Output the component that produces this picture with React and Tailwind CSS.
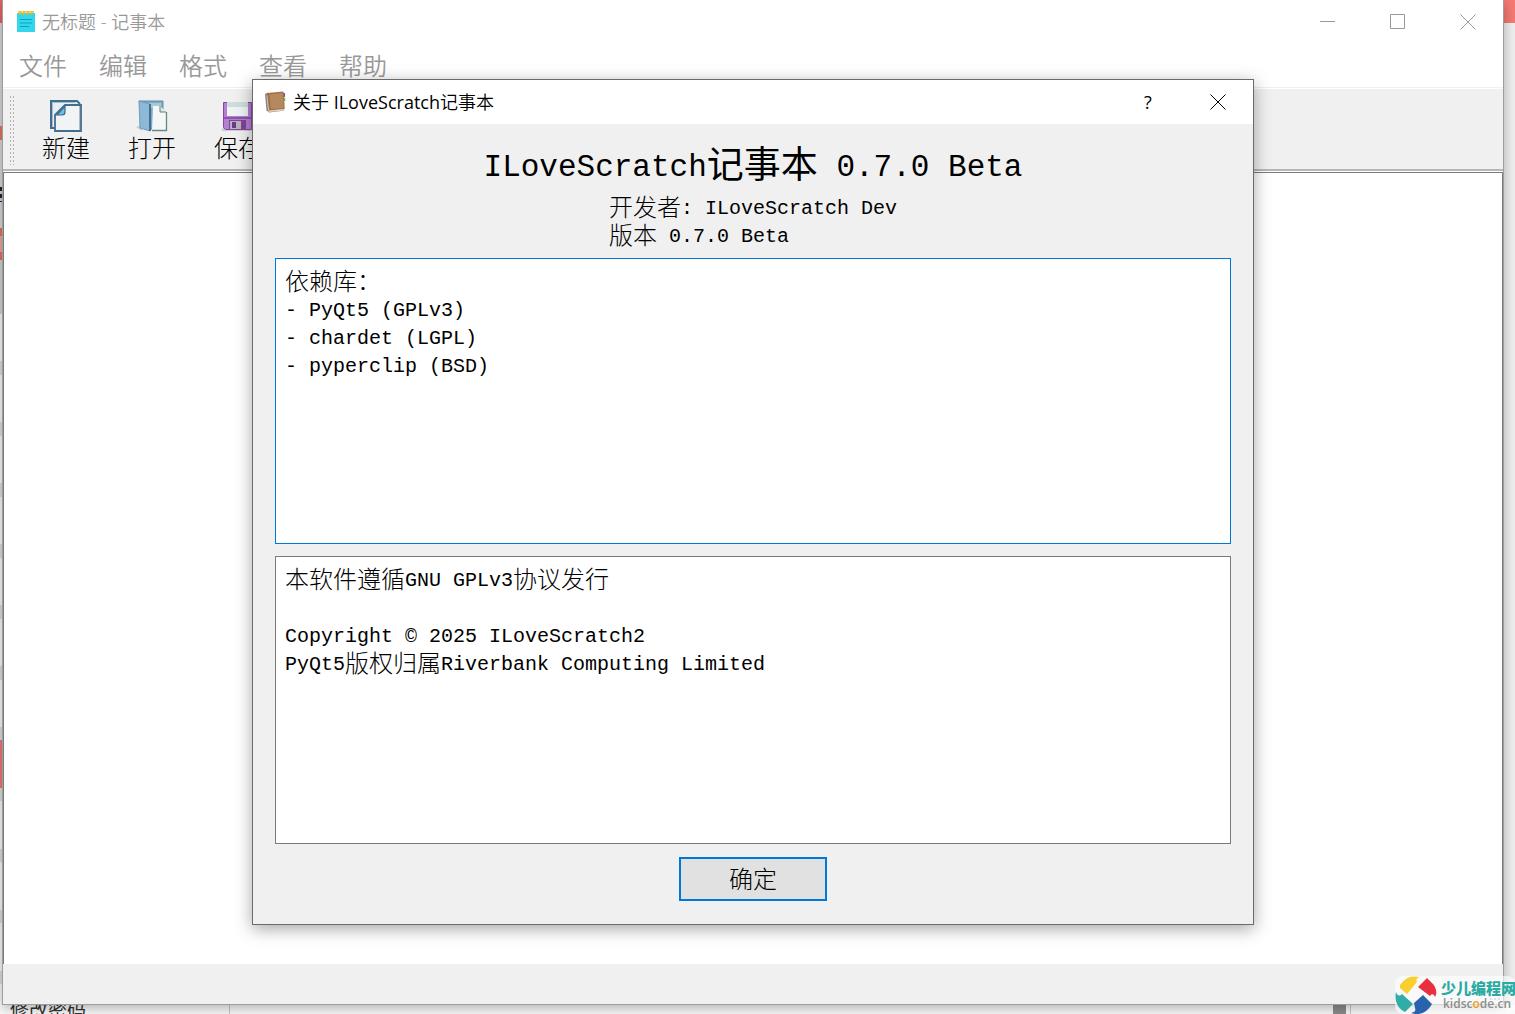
import React, { useState } from 'react';

const MENUS = ['文件', '编辑', '格式', '查看', '帮助'];

// Slices of the page that peek out to the left of the window
const LEFT_SLICES = [
  'h-[23px] bg-[#e86560]',
  'h-[103px] bg-[#dadada]',
  'h-3.5 bg-[#e07a64]',
  'h-[47px] bg-[#dadada]',
  'h-[15px] bg-[repeating-linear-gradient(#22223a_0_4px,#d0d6dc_4px_7px)]',
  'h-[26px] bg-[#dadada]',
  'h-2 bg-[#e07464]',
  'h-4 bg-[#e8aaa2]',
  'h-2 bg-[#e07464]',
  'h-[54px] bg-[#d6d6d4]',
];

function NotepadIcon() {
  return (
    <svg width="20" height="22" viewBox="0 0 20 22" aria-hidden="true">
      <rect x="1" y="2" width="18" height="19" fill="#33d6ea" />
      <path d="M4 8.500h12M4 12h12M4 15.500h9" stroke="#0aa5c4" strokeWidth="1.200" />
      <path
        d="M3 4V1.500q0-1.500 2-1v2M7 4V1.500q0-1.500 2-1v2M11 4V1.500q0-1.500 2-1v2M15 4V1.500q0-1.500 2-1v2"
        stroke="#f2b51d"
        strokeWidth="1.400"
        fill="none"
      />
    </svg>
  );
}

function BookIcon() {
  return (
    <svg width="21" height="22" viewBox="0 0 21 22" aria-hidden="true">
      <path d="M0 3l3-1.500 1.500 18.500L18 19l2 .5-16 2-2.500-2z" fill="#8b8378" />
      <path d="M1.500 4l2 .5 1 15-1.500-.5z" fill="#d8d3c8" />
      <path d="M3 19.500l16-1.500v1.500L4 21z" fill="#ddd6c6" />
      <path d="M2 2L18 .5l1 1.500.7 16L4 19.500z" fill="#a3714a" />
      <path d="M4.500 3.500l13.500-1.500.7 15L6 18z" fill="#b6885d" />
      <path d="M18.500 2h1.500v4h-1.500z" fill="#8d4fa3" />
      <path d="M18.800 7h1.500v3h-1.500z" fill="#79b82e" />
    </svg>
  );
}

function NewIcon() {
  return (
    <svg width="32" height="32" viewBox="0 0 32 32" aria-hidden="true">
      <path d="M1 1h26l3 4v23H1z" fill="#e9eef2" />
      <path d="M5 28H1V1h26l3 3" fill="none" stroke="#426e8f" strokeWidth="2" />
      <path d="M2.500 27V2.500h23" fill="none" stroke="#a9bccb" />
      <path d="M5 15L15 5h16v26H5z" fill="#f1f3f4" stroke="#426e8f" strokeWidth="1.800" />
      <path d="M29.500 6v24" stroke="#a9bccb" />
      <path d="M7 15l8-9v6q0 3-3 3z" fill="#6cc0e8" stroke="#3b6a8d" strokeWidth="1.200" />
    </svg>
  );
}

function OpenIcon() {
  return (
    <svg width="32" height="32" viewBox="0 0 32 32" aria-hidden="true">
      <path d="M0 27l6-2v6z" fill="#c9cccd" />
      <path d="M3 1h24v28H8z" fill="#7ea9c4" stroke="#5e8dab" />
      <path d="M12 3h13v5H14z" fill="#a8c9da" />
      <path d="M3 1l11 3v27L4 28z" fill="#8db8d6" stroke="#6f9dbd" />
      <path d="M14 4v27" stroke="#3c6a8c" strokeWidth="1.800" />
      <path d="M17 6h7l6 6v19H16z" fill="#f3f8f7" />
      <path d="M24 6v6h6" fill="#dbe7e6" stroke="#63827f" />
      <path d="M30.500 12v18.500H16" fill="none" stroke="#6b8583" strokeWidth="1.300" />
    </svg>
  );
}

function SaveIcon() {
  return (
    <svg width="32" height="32" viewBox="0 0 32 32" aria-hidden="true">
      <path d="M0 28h32v3H0z" fill="#cfcfcf" />
      <path d="M1.500 2.500h28v27h-26l-2-2z" fill="#b57fd2" stroke="#83489f" />
      <path d="M5 2h21v14H5z" fill="#edf4f3" />
      <path d="M5 2h21v5H5z" fill="#cfdedd" />
      <path d="M2 17h27v2H2z" fill="#8d54ab" />
      <path d="M7 20h17v9H7z" fill="#7e4599" />
      <path d="M8 21h11v8H8z" fill="#b8b4bb" />
      <path d="M10 22h4v6h-4z" fill="#6e3890" />
    </svg>
  );
}

function CloseGlyph() {
  return (
    <svg width="16" height="16" viewBox="0 0 16 16" aria-hidden="true">
      <path d="M.5.5l15 15M15.500.5l-15 15" stroke="currentColor" />
    </svg>
  );
}

// Half-width text set next to full-width characters
function Latin({ children }) {
  return (
    <span className="align-[2px] font-['Liberation_Mono',monospace] text-[20px] leading-none">
      {children}
    </span>
  );
}

function ToolButton({ icon, label }) {
  return (
    <button type="button" className="flex w-[86px] shrink-0 flex-col items-center gap-1">
      {icon}
      <span className="text-2xl leading-6">{label}</span>
    </button>
  );
}

function AboutDialog({ onClose }) {
  return (
    <div
      role="dialog"
      aria-labelledby="about-title"
      className="w-[1002px] border border-[#6b6b6b] bg-[#f0f0f0] text-black shadow-[0_4px_16px_rgba(0,0,0,0.35)]"
    >
      <div className="flex h-11 items-center bg-white pl-3 font-[350]">
        <BookIcon />
        <h2 id="about-title" className="ml-[7px] flex-1 text-lg">
          关于 <span className="font-normal">ILoveScratch</span>记事本
        </h2>
        <button type="button" aria-label="帮助" className="h-11 w-[70px] text-lg font-normal">
          ?
        </button>
        <button
          type="button"
          aria-label="关闭"
          onClick={onClose}
          className="flex h-11 w-[70px] items-center justify-center"
        >
          <CloseGlyph />
        </button>
      </div>

      <div className="flex flex-col items-center px-[22px] pt-4 pb-[23px] text-2xl leading-7">
        <h1 className="h-12 text-[37px] leading-[48px] font-normal">
          <span className="align-[2px] font-['Liberation_Mono',monospace] text-[31px] leading-none">
            ILoveScratch
          </span>
          记事本
          <span className="align-[2px] font-['Liberation_Mono',monospace] text-[31px] leading-none">
            {' '}
            0.7.0 Beta
          </span>
        </h1>
        <div className="mt-[5px] mb-[9px]">
          <p className="h-7">
            开发者<Latin>: ILoveScratch Dev</Latin>
          </p>
          <p className="h-7">
            版本<Latin> 0.7.0 Beta</Latin>
          </p>
        </div>

        <div
          tabIndex={0}
          className="mb-3 h-[286px] w-full overflow-auto border border-[#0078d7] bg-white px-[9px] py-2 outline-none"
        >
          <p className="h-7">依赖库：</p>
          <p className="h-7"><Latin>- PyQt5 (GPLv3)</Latin></p>
          <p className="h-7"><Latin>- chardet (LGPL)</Latin></p>
          <p className="h-7"><Latin>- pyperclip (BSD)</Latin></p>
        </div>

        <div
          tabIndex={0}
          className="mb-[13px] h-[288px] w-full overflow-auto border border-[#7a7a7a] bg-white px-[9px] py-2 outline-none"
        >
          <p className="mb-7 h-7">
            本软件遵循<Latin>GNU GPLv3</Latin>协议发行
          </p>
          <p className="h-7"><Latin>Copyright © 2025 ILoveScratch2</Latin></p>
          <p className="h-7">
            <Latin>PyQt5</Latin>版权归属<Latin>Riverbank Computing Limited</Latin>
          </p>
        </div>

        <button
          type="button"
          onClick={onClose}
          className="h-11 w-[148px] border-2 border-[#0078d7] bg-[#e1e1e1]"
        >
          确定
        </button>
      </div>
    </div>
  );
}

function Watermark() {
  return (
    <div className="flex h-[38px] w-[120px] items-center gap-1 rounded-lg bg-white/60">
      <svg width="42" height="38" viewBox="0 0 42 38" className="shrink-0" aria-hidden="true">
        <path d="M5 9C10 2 16-1 24 1c-3 2-3 3-2 5L12 18 5 12z" fill="#f9cf2d" />
        <path d="M23 11l9-9 6 6c4 5 4 10 2 13-1-3-3-4-5-1z" fill="#e8303f" />
        <path d="M1 16c1 3 3 5 6 2l11 10-8 8C3 33-1 25 1 16z" fill="#2fada6" />
        <path d="M19 27l9-8 9 9c-5 9-13 12-21 9 4-1 5-2 4-5z" fill="#2a63ad" />
      </svg>
      <div className="flex flex-col">
        <span className="text-[15px] leading-[18px] font-black whitespace-nowrap text-[#2aaba2]">少儿编程网</span>
        <span className="pl-0.5 font-['Open_Sans',sans-serif] text-xs leading-[14px] font-semibold text-[#8d8d8d]">
          kidsc<span className="text-[#f39a1e]">o</span>de.cn
        </span>
      </div>
    </div>
  );
}

export default function App() {
  const [aboutOpen, setAboutOpen] = useState(true);
  const [text, setText] = useState('');

  return (
    <div className="relative flex h-screen flex-col overflow-hidden bg-[#f0f0f0] font-['Open_Sans','Noto_Sans_CJK_SC',sans-serif] font-light">
      <div className="flex min-h-0 flex-1">
        <div className="flex w-0.5 flex-col">
          {LEFT_SLICES.map((slice, i) => (
            <div key={i} className={slice} />
          ))}
          <div className="h-[426px] bg-[repeating-linear-gradient(#fafaf8_0_47px,#e0e0de_47px_61px)]" />
          <div className="h-12 bg-[#f07a7a]" />
          <div className="flex-1 bg-[repeating-linear-gradient(#e0e0de_0_13px,#fafaf8_13px_61px)]" />
        </div>

        {/* Notepad window */}
        <div className="relative z-10 flex min-w-0 flex-1 flex-col border-x border-b border-[#9d9d9d] bg-white shadow-[0_3px_12px_rgba(0,0,0,0.3)]">
          <div className="flex h-11 items-center pl-[13px] font-[350] text-[#999999]">
            <NotepadIcon />
            <span className="ml-1.5 flex-1 text-lg">无标题 - 记事本</span>
            <button type="button" aria-label="最小化" className="flex h-11 w-[70px] items-center justify-center">
              <svg width="16" height="16" viewBox="0 0 16 16" aria-hidden="true">
                <path d="M0 7.500h15" stroke="currentColor" />
              </svg>
            </button>
            <button type="button" aria-label="最大化" className="flex h-11 w-[70px] items-center justify-center">
              <svg width="16" height="16" viewBox="0 0 16 16" aria-hidden="true">
                <path d="M.5.5h14v14H.5z" fill="none" stroke="currentColor" />
              </svg>
            </button>
            <button type="button" aria-label="关闭" className="flex h-11 w-[70px] items-center justify-center">
              <CloseGlyph />
            </button>
          </div>

          <nav className="flex h-11 border-b border-[#f0f0f0] text-2xl font-[350] text-[#999999]">
            {MENUS.map((menu) => (
              <button
                key={menu}
                type="button"
                className="px-4"
                onClick={() => menu === '帮助' && setAboutOpen(true)}
              >
                {menu}
              </button>
            ))}
          </nav>

          <div className="mt-px flex h-[82px] items-center border-b-2 border-[#b5b9b5] bg-[#f0f0f0] pt-0.5 pl-1.5 text-black">
            <div className="mr-2 h-[70px] w-1.5 bg-[radial-gradient(circle,#b4b4b4_1px,transparent_1px)] bg-[size:3px_4px]" />
            <ToolButton icon={<NewIcon />} label="新建" />
            <ToolButton icon={<OpenIcon />} label="打开" />
            <ToolButton icon={<SaveIcon />} label="保存" />
          </div>

          <textarea
            aria-label="编辑区"
            value={text}
            onChange={(e) => setText(e.target.value)}
            className="mt-px w-full flex-1 resize-none border-x border-t border-[#7a7a7a] p-2 text-2xl outline-none"
          />
          <footer className="flex h-10 shrink-0 items-end justify-end bg-[#f0f0f0] p-0.5">
            <svg width="12" height="12" viewBox="0 0 12 12" aria-hidden="true">
              <path d="M9 0h2v2H9zM5 4h2v2H5zM9 4h2v2H9zM1 8h2v2H1zM5 8h2v2H5zM9 8h2v2H9z" fill="#b4b4b4" />
            </svg>
          </footer>

          {aboutOpen && (
            <div className="absolute inset-0 flex items-center justify-center">
              <AboutDialog onClose={() => setAboutOpen(false)} />
            </div>
          )}
        </div>

        <div className="w-[11px]">
          <div className="h-[23px] bg-[#f77a74]" />
        </div>
      </div>

      {/* Page behind the window */}
      <div className="flex h-[9px] overflow-hidden bg-[#fafafa]">
        <div className="flex w-[230px] items-center border-r border-[#c8c8c8] pl-2.5">
          <span className="text-[19px] leading-5 font-normal text-[#333333]">修改密码</span>
        </div>
        <div className="flex-1" />
        <div className="mr-1 w-[13px] bg-[#8c8c8c]" />
        <div className="w-[165px] border-l border-[#c8c8c8]" />
      </div>

      <div className="absolute right-0 bottom-0 z-20">
        <Watermark />
      </div>
    </div>
  );
}
